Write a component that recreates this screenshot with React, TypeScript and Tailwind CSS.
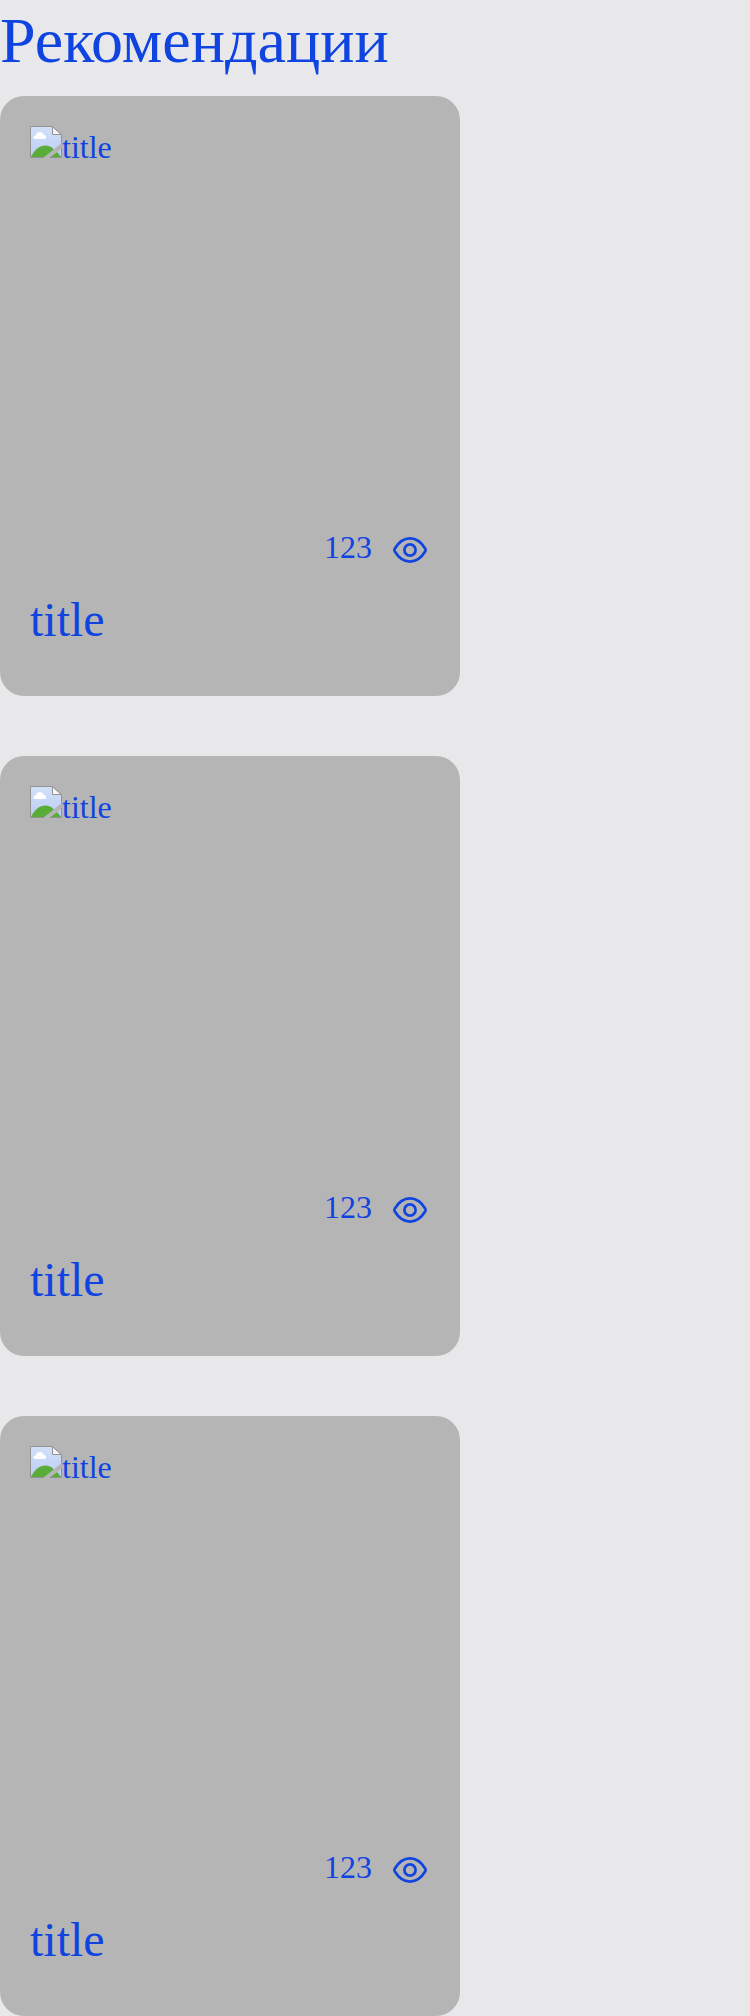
const cards = [
  { id: 1, title: 'title', views: 123 },
  { id: 2, title: 'title', views: 123 },
  { id: 3, title: 'title', views: 123 },
];

function MissingImage() {
  return (
    <svg width="32" height="32" viewBox="0 0 32 32" className="shrink-0" aria-hidden="true">
      <defs>
        <linearGradient id="sky" x1="0" y1="0" x2="0" y2="1">
          <stop offset="0" stopColor="#d3e0f9" />
          <stop offset="1" stopColor="#b9cdf2" />
        </linearGradient>
      </defs>
      <path d="M.5 .5H22L31.5 8.5V17L14 31.5H.5Z" fill="url(#sky)" />
      <path d="M5 13C3 13 2.7 9.4 6 9.2C6.8 5.3 12.5 4.7 13.6 8.7C16.4 8.5 17 13 14.5 13Z" fill="#fff" />
      <path d="M1 31C5 23 10 19.6 15.3 19.6C18.5 19.6 21.3 20.8 23.8 23.4L14.3 31Z" fill="#5aac38" />
      <path d="M20.5 31L27.3 26L31 30.8V31Z" fill="#5aac38" />
      <path d="M27.3 26L31 22.7V30.8Z" fill="#b9cdf2" />
      <path d="M14 31.5H.5V.5H22L31.5 8.5V17M20 31.5H31.5V22" fill="none" stroke="#929292" />
      <path d="M22.5 .8V8.5H31.2Z" fill="#f8f8f8" stroke="#929292" />
    </svg>
  );
}

function EyeIcon() {
  return (
    <svg width="40" height="40" viewBox="0 0 40 40" fill="none" stroke="currentColor" strokeWidth="2.7" aria-hidden="true">
      <path d="M4.7 21.3C4.1 20.5 4.1 19.5 4.7 18.7C8.6 12.2 14 8.4 20 8.4S31.4 12.2 35.3 18.7C35.9 19.5 35.9 20.5 35.3 21.3C31.4 27.8 26 31.6 20 31.6S8.6 27.8 4.7 21.3Z" />
      <circle cx="20" cy="20" r="5.6" />
    </svg>
  );
}

export default function App() {
  return (
    <main className="min-h-[2016px] bg-[#e8e8ea] text-[#1044e0] font-['Liberation_Serif',serif]">
      <h1 className="mb-3.5 h-[82px] text-[64px] leading-[82px]">Рекомендации</h1>
      <div className="flex flex-col gap-[60px]">
        {cards.map((card) => (
          <article key={card.id} className="flex h-[600px] w-[460px] flex-col rounded-3xl bg-[#b5b5b5] p-[30px]">
            <div className="flex h-[404px] items-start text-[32px] leading-[42px]">
              <MissingImage />
              <span>{card.title}</span>
            </div>
            <div className="flex h-10 items-center justify-end gap-[18px] text-[32px] leading-10">
              <span className="-mt-1.5">{card.views}</span>
              <EyeIcon />
            </div>
            <h2 className="mt-5 text-5xl leading-[60px]">{card.title}</h2>
          </article>
        ))}
      </div>
    </main>
  );
}
